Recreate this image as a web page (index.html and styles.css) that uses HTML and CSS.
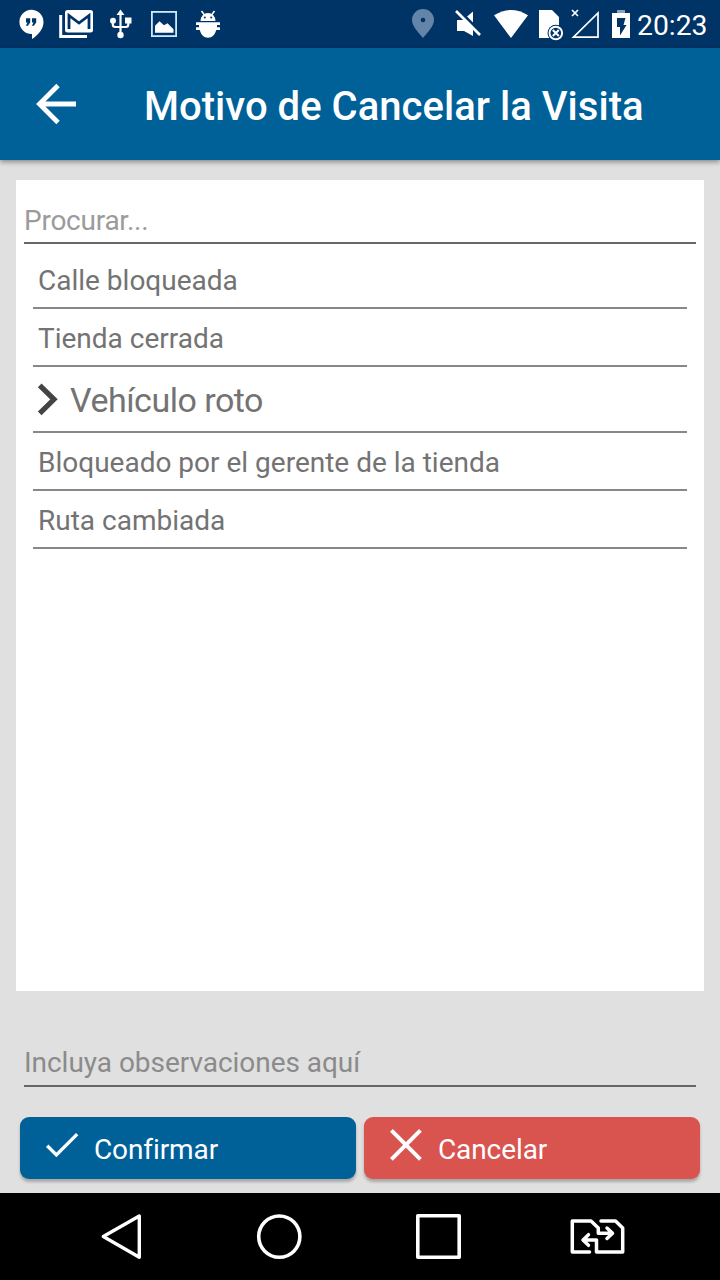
FILE: index.html
```html
<!DOCTYPE html>
<html lang="es">
<head>
<meta charset="utf-8">
<title>Motivo de Cancelar la Visita</title>
<link rel="stylesheet" href="styles.css">
</head>
<body>
<div class="screen">
  <div class="status">
    <div class="notifications">
      <svg width="25" height="48" viewBox="19 0 25 48"><path fill="#fff" d="M31.3 9.7a12.2 12.2 0 0 1 12.2 12.2c0 6.600-5 13-11.500 17v-4.800A12.200 12.200 0 1 1 31.300 9.700z"/><path fill="#003366" d="M26 18.300h4.200v4.200l-2.300 3.200h-2l1.600-3.200H26zM32 18.300h4.200v4.200l-2.300 3.200h-2l1.600-3.200H32z"/></svg>
      <svg width="35" height="48" viewBox="59 0 35 48"><path fill="none" stroke="#fff" stroke-width="3" d="M60.700 15v21.500H87"/><rect x="65" y="10" width="28" height="22.500" rx="2.500" fill="#fff"/><path fill="none" stroke="#003366" stroke-width="2.800" d="M69 29V15.500l10 7.500 10-7.500V29"/></svg>
      <svg width="22" height="48" viewBox="110 0 22 48"><g fill="none" stroke="#fff" stroke-width="2.200"><path d="M120.500 12v23M112.800 21v3.500q0 2.500 2.500 2.500h10.500q2.500 0 2.500-2.500V21"/></g><path fill="#fff" d="M120.500 9.500l4 5.500h-8zM125 17.500h6.500v6H125z"/><circle cx="113" cy="20.700" r="3" fill="#fff"/><circle cx="120.500" cy="35" r="3.200" fill="#fff"/></svg>
      <svg width="27" height="48" viewBox="151 0 27 48"><rect x="151.900" y="11.900" width="24.200" height="24.200" fill="none" stroke="#cfe8ff" stroke-width="1.800"/><path fill="#fff" d="M155 32.800v-7l4.500-4.500 4.500 4 3.500-2 6 6v3.500z"/></svg>
      <svg width="26" height="48" viewBox="195 0 26 48"><path fill="#fff" d="M200.500 21a7.500 8 0 0 1 15 0zM196 22.300h24v2.700h-3v2.300h3V30h-3.800c-1 4.500-4 7.700-8.200 7.700s-7.200-3.200-8.200-7.700H196v-2.700h3V25h-3z"/><path stroke="#fff" stroke-width="1.500" d="M201.500 11l3 4M214.500 11l-3 4"/><circle cx="204.800" cy="17.500" r="1" fill="#003366"/><circle cx="211.200" cy="17.500" r="1" fill="#003366"/></svg>
    </div>
    <div class="system">
      <svg width="23" height="48" viewBox="411 0 23 48"><path fill="#6484a8" fill-rule="evenodd" d="M423 9a11 11 0 0 1 11 11c0 6-6 12-11 18-5-6-11-12-11-18A11 11 0 0 1 423 9zm0 8.700a2.300 2.300 0 1 0 0 4.600 2.300 2.300 0 0 0 0-4.600z"/></svg>
      <svg width="27" height="48" viewBox="455 0 27 48"><path fill="#fff" d="M457 20h6l10-8.500V36l-9-5h-7z"/><path stroke="#003366" stroke-width="3" d="M458 9.500l24 24"/><path stroke="#fff" stroke-width="2.700" d="M456 11l24 24"/></svg>
      <svg width="35" height="48" viewBox="494 0 35 48"><path fill="#fff" d="M494 15.300q17-10.800 34 0L511 38z"/></svg>
      <svg width="26" height="48" viewBox="538 0 26 48"><path fill="#fff" d="M539 10h13l7 7v21h-20z"/><circle cx="555.800" cy="33" r="8.300" fill="#003366"/><circle cx="555.800" cy="33" r="6.300" fill="none" stroke="#fff" stroke-width="1.900"/><path stroke="#fff" stroke-width="2" d="M552.800 30l6 6m0-6l-6 6"/></svg>
      <svg width="30" height="48" viewBox="570 0 30 48"><path fill="none" stroke="#fff" stroke-width="1.700" d="M598 13v24.200h-24.500zM572 10l6 6m0-6l-6 6"/></svg>
      <svg width="18" height="48" viewBox="612 0 18 48"><path fill="#8ca3bd" d="M617 10h8v4h-8z"/><path fill="#fff" d="M612 13h18v25h-18z"/><path fill="#003366" d="M617 18h8.500l-2 7h3l-6.500 10.500V27h-3z"/></svg>
      <span class="clock">20:23</span>
    </div>
  </div>
  <header class="toolbar">
    <svg class="back" width="42" height="42" viewBox="35 83 42 42"><path fill="none" stroke="#fff" stroke-width="4.800" d="M76 104H40M58 85.500L39.500 104 58 122.500"/></svg>
    <h1 class="title">Motivo de Cancelar la Visita</h1>
  </header>
  <main class="content">
    <section class="card">
      <div class="field search">Procurar...</div>
      <ul class="reasons">
        <li class="reason">Calle bloqueada</li>
        <li class="reason">Tienda cerrada</li>
        <li class="reason selected"><svg class="chevron" width="22" height="34" viewBox="37 382 22 34"><path fill="none" stroke="#444" stroke-width="5.200" d="M39.700 385.300L54 399.300 39.700 413.300"/></svg><span class="label">Vehículo roto</span></li>
        <li class="reason">Bloqueado por el gerente de la tienda</li>
        <li class="reason">Ruta cambiada</li>
      </ul>
    </section>
    <div class="field notes">Incluya observaciones aquí</div>
    <div class="actions">
      <div class="button confirm"><svg width="34" height="34" viewBox="45 1128 34 34"><path fill="none" stroke="#fff" stroke-width="3.400" d="M47.200 1145.700l9.200 9.200 20.800-20.800"/></svg><span class="label">Confirmar</span></div>
      <div class="button cancel"><svg width="34" height="34" viewBox="389 1128 34 34"><path fill="none" stroke="#fff" stroke-width="4" d="M391.400 1130.400l29 29m0-29l-29 29"/></svg><span class="label">Cancelar</span></div>
    </div>
  </main>
  <nav class="navbar">
    <svg width="44" height="50" viewBox="99 1212 44 50"><path fill="none" stroke="#fff" stroke-width="3.400" stroke-linejoin="round" d="M139.300 1216v41.200L103.300 1236.600z"/></svg>
    <svg width="46" height="50" viewBox="256 1212 46 50"><circle cx="279.300" cy="1236.600" r="20.600" fill="none" stroke="#fff" stroke-width="3.600"/></svg>
    <svg width="46" height="50" viewBox="415 1212 46 50"><rect x="417.800" y="1215.800" width="41.400" height="41.400" fill="none" stroke="#fff" stroke-width="3.600" stroke-linejoin="round"/></svg>
    <svg class="swap" width="56" height="50" viewBox="569 1212 56 50"><g fill="none" stroke="#fff" stroke-width="3.500" stroke-linecap="round" stroke-linejoin="round"><path d="M589.500 1252h-17.200v-31h18.700l7.300 7v5.300h14M607 1228l5.500 5.300-5.500 5.200M601 1221h14.500l7.200 7v24h-26.200v-12h-12.500M588.500 1234.700l-5.500 5.300 5.500 5.300"/></g></svg>
  </nav>
</div>
</body>
</html>
```
FILE: styles.css
```css
* { box-sizing: border-box; }
body { margin: 0; font-family: Roboto, sans-serif; }
svg { display: block; flex: none; }
.screen { width: 720px; height: 1280px; display: flex; flex-direction: column; background: #e0e0e0; overflow: hidden; }

.status { height: 48px; background: #003366; display: flex; justify-content: space-between; padding: 0 12px 0 19px; }
.notifications, .system { display: flex; }
.notifications { gap: 17px; }
.notifications svg:nth-child(2) { margin-left: -2px; }
.notifications svg:nth-child(3) { margin-left: -1px; }
.notifications svg:nth-child(4) { margin-left: 2px; }
.system svg:nth-child(1) { margin-right: 21px; }
.system svg:nth-child(2) { margin-right: 12px; }
.system svg:nth-child(3) { margin-right: 9px; }
.system svg:nth-child(4) { margin-right: 6px; }
.system svg:nth-child(5) { margin-right: 12px; }
.clock { width: 71px; margin-left: 7px; color: #fff; font-size: 28.3px; line-height: 52px; white-space: nowrap; }

.toolbar { height: 112px; flex: none; background: #006199; display: flex; align-items: center; padding-left: 35px; box-shadow: 0 2px 5px rgba(0, 0, 0, .4); position: relative; }
.title { margin: 6px 0 0 67px; color: #fff; font-size: 40px; font-weight: 500; line-height: 48px; letter-spacing: .03px; white-space: nowrap; }

.content { flex: 1; display: flex; flex-direction: column; padding: 20px 16px 14px; }
.card { height: 811px; background: #fff; padding: 20px 8px 0; }
.field { height: 44px; border-bottom: 2px solid #666; font-size: 28px; line-height: 42px; color: #9b9b9b; white-space: nowrap; }
.search { letter-spacing: -.25px; }
.reasons { list-style: none; margin: 7px 9px 0; padding: 0; }
.reason { height: 58px; padding-left: 5px; border-bottom: 2px solid #888; color: #737373; font-size: 28px; line-height: 59px; white-space: nowrap; }
.selected { height: 66px; display: flex; align-items: center; gap: 11px; padding-left: 4px; font-size: 34px; line-height: 40px; letter-spacing: -.5px; }
.selected .label { margin-top: 2px; }
.notes { margin: 51px 8px 0; height: 45px; color: #8b8b8b; letter-spacing: -.04px; }
.actions { display: flex; gap: 8px; margin: 30px 4px 0; }
.button { flex: 1; height: 62px; border-radius: 9px; display: flex; align-items: center; gap: 15px; padding-left: 25px; color: #fff; font-size: 28px; line-height: 40px; letter-spacing: -.1px; box-shadow: 0 3px 3px rgba(0, 0, 0, .25); }
.button svg { margin-bottom: 6px; }
.button .label { margin-top: 4px; }
.confirm { background: #006199; }
.cancel { background: #d9534f; }

.navbar { height: 87px; flex: none; background: #000; display: flex; gap: 113px; padding: 19px 0 0 99px; }
.swap { margin-left: -5px; }
```
